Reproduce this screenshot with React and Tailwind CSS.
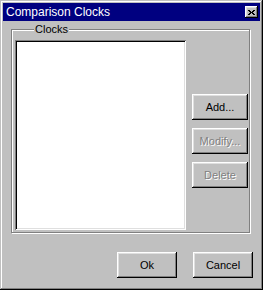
import React from "react";

const base =
  "bg-[#c0c0c0] shadow-[inset_-1px_-1px_#000,inset_1px_1px_#fff,inset_-2px_-2px_#808080,inset_2px_2px_#dfdfdf] flex items-center justify-center text-[11px]";
const btn = base + " text-black";
const disabled = base + " text-[#808080] [text-shadow:1px_1px_0_#fff]";

function CloseGlyph() {
  const rows = [
    "XX...XX",
    ".XX.XX.",
    "..XXX..",
    ".XX.XX.",
    "XX...XX",
  ];
  const rects = [];
  rows.forEach((r, y) =>
    r.split("").forEach((c, x) => {
      if (c === "X") rects.push(<rect key={x + "-" + y} x={x} y={y} width="1" height="1" fill="#000" />);
    })
  );
  return (
    <svg width="7" height="5" viewBox="0 0 7 5" shapeRendering="crispEdges">
      {rects}
    </svg>
  );
}

export default function App() {
  return (
    <div
      className="w-[263px] h-[290px] bg-[#c0c0c0] p-[3px] flex flex-col shadow-[inset_-1px_-1px_#000,inset_1px_1px_#c0c0c0,inset_-2px_-2px_#808080,inset_2px_2px_#fff]"
      style={{ fontFamily: '"Liberation Sans", Arial, sans-serif' }}
    >
      <div className="h-[18px] bg-[#000080] flex items-center justify-between pl-[3px] pr-[2px]">
        <span className="text-white text-[12px] leading-none">Comparison Clocks</span>
        <div className={btn + " w-[13px] h-[12px]"}>
          <CloseGlyph />
        </div>
      </div>

      <div className="mt-[8px] ml-[8px] w-[239px] h-[204px] relative border border-[#808080] shadow-[1px_1px_0_#fff,inset_1px_1px_0_#fff] flex pl-[3px] pt-[10px]">
        <div className="absolute left-[22px] top-[-8px] px-[1px] bg-[#c0c0c0] text-[11px] leading-[14px] text-black">
          Clocks
        </div>
        <div className="w-[171px] h-[190px] bg-white shadow-[inset_1px_1px_#808080,inset_-1px_-1px_#fff,inset_2px_2px_#000,inset_-2px_-2px_#dfdfdf]" />
        <div className="ml-[6px] pt-[54px] flex flex-col gap-[8px]">
          <div className={btn + " w-[56px] h-[26px]"}>Add...</div>
          <div className={disabled + " w-[56px] h-[26px]"}>Modify...</div>
          <div className={disabled + " w-[56px] h-[26px]"}>Delete</div>
        </div>
      </div>

      <div className="mt-[19px] flex justify-end gap-[16px] pr-[7px]">
        <div className={btn + " w-[60px] h-[26px]"}>Ok</div>
        <div className={btn + " w-[60px] h-[26px]"}>Cancel</div>
      </div>
    </div>
  );
}
